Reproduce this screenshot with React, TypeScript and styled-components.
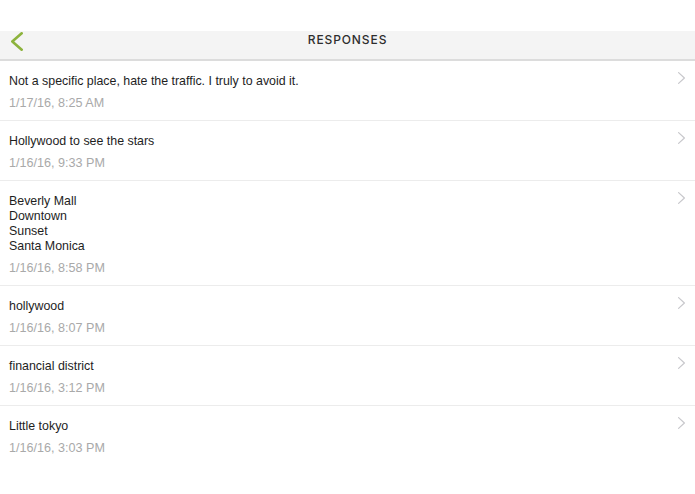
import React from 'react';
import styled, { createGlobalStyle } from 'styled-components';

type ResponseType = {
    lines: string[];
    date: string;
};

const responses: ResponseType[] = [
    { lines: ['Not a specific place, hate the traffic. I truly to avoid it.'], date: '1/17/16, 8:25 AM' },
    { lines: ['Hollywood to see the stars'], date: '1/16/16, 9:33 PM' },
    { lines: ['Beverly Mall', 'Downtown', 'Sunset', 'Santa Monica'], date: '1/16/16, 8:58 PM' },
    { lines: ['hollywood'], date: '1/16/16, 8:07 PM' },
    { lines: ['financial district'], date: '1/16/16, 3:12 PM' },
    { lines: ['Little tokyo'], date: '1/16/16, 3:03 PM' },
];

const GlobalStyle = createGlobalStyle`
    body {
        margin: 0;
        background: #fff;
        font-family: "Liberation Sans", Arial, sans-serif;
    }
`;

const Chevron = ({ color, width, height, stroke }: { color: string; width: number; height: number; stroke: number }) => (
    <svg width={width} height={height} viewBox={`0 0 ${width} ${height}`} fill="none">
        <polyline
            points={`${stroke / 2},${stroke / 2} ${width - stroke / 2},${height / 2} ${stroke / 2},${height - stroke / 2}`}
            stroke={color}
            strokeWidth={stroke}
            strokeLinecap="round"
            strokeLinejoin="round"
        />
    </svg>
);

export default function App() {
    return (
        <Page>
            <GlobalStyle />
            <Header>
                <BackButton>
                    <Flip>
                        <Chevron color="#8db33d" width={12} height={19} stroke={2.6} />
                    </Flip>
                </BackButton>
                <Title>RESPONSES</Title>
            </Header>
            <List>
                {responses.map((r, i) => (
                    <Row key={i}>
                        <Content>
                            <Text>
                                {r.lines.map((l, j) => (
                                    <div key={j}>{l}</div>
                                ))}
                            </Text>
                            <DateText>{r.date}</DateText>
                        </Content>
                        <Arrow>
                            <Chevron color="#c8c8cc" width={7} height={12} stroke={1.2} />
                        </Arrow>
                    </Row>
                ))}
            </List>
        </Page>
    );
}

const Page = styled.div`
    width: 695px;
    height: 494px;
    padding-top: 31px;
    box-sizing: border-box;
    overflow: hidden;
`;

const Header = styled.div`
    position: relative;
    height: 28px;
    background: #f4f4f4;
    border-bottom: 2px solid #dcdcdc;
    display: flex;
    align-items: center;
    justify-content: center;
`;

const BackButton = styled.div`
    position: absolute;
    left: 11px;
    top: 1px;
    display: flex;
`;

const Flip = styled.div`
    display: flex;
    transform: scaleX(-1);
`;

const Title = styled.div`
    font-family: Inter, "Open Sans", sans-serif;
    font-weight: 500;
    font-size: 12px;
    letter-spacing: 0.9px;
    color: #2e2e2e;
    margin-top: -12px;
`;

const List = styled.div`
    display: flex;
    flex-direction: column;
`;

const Row = styled.div`
    display: flex;
    justify-content: space-between;
    border-bottom: 1px solid #ececec;
    padding: 13px 10px 9px 9px;

    &:last-child {
        border-bottom: none;
    }
`;

const Content = styled.div`
    display: flex;
    flex-direction: column;
    gap: 7px;
`;

const Text = styled.div`
    font-size: 12.4px;
    line-height: 15px;
    color: #1e1e1e;
`;

const DateText = styled.div`
    font-size: 12.6px;
    line-height: 15px;
    color: #a9a9a9;
`;

const Arrow = styled.div`
    display: flex;
    margin-top: -2px;
`;
